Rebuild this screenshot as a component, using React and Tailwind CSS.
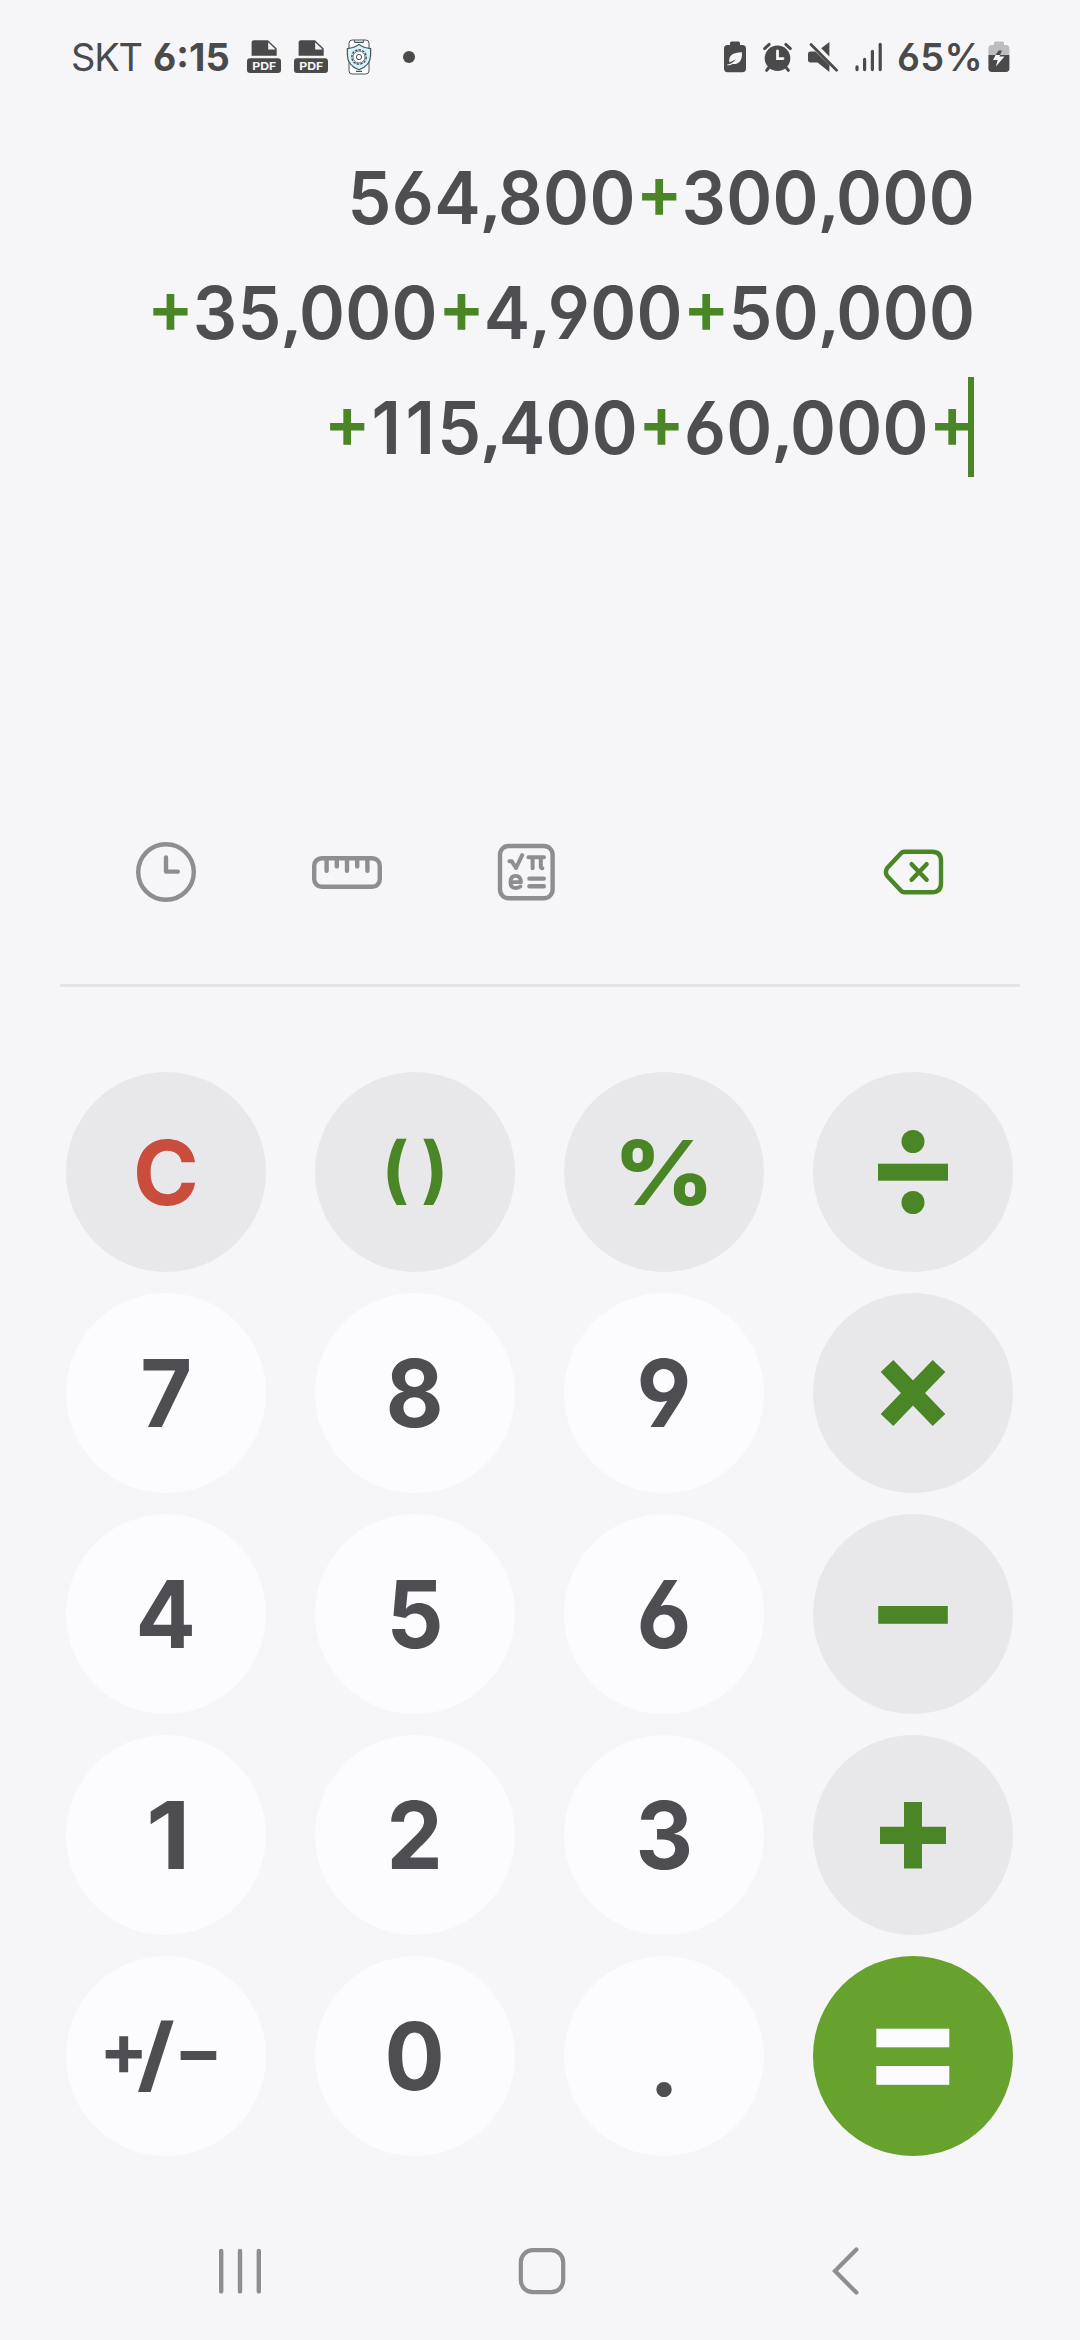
import React from "react";

const DARK = "#4a4a4a";

function PdfIcon({ className }) {
  return (
    <svg className={className} width="34" height="34" viewBox="0 0 34 34">
      <path d="M7 0.3H21L29.7 8.5V15.8H4.6V2.6Q4.6 0.3 7 0.3Z" fill={DARK} />
      <path d="M21.2 2.2V9.4H28.6Z" fill="#f6f6f8" />
      <rect x="0" y="18.3" width="34" height="14.8" rx="3" fill={DARK} />
      <text x="17.2" y="29.8" textAnchor="middle" textLength="24" lengthAdjust="spacingAndGlyphs" fontFamily="Inter, sans-serif" fontWeight="700" fontSize="11" fill="#f6f6f8">PDF</text>
    </svg>
  );
}

function ShieldPhoneIcon({ className }) {
  return (
    <svg className={className} width="26" height="36" viewBox="0 0 26 36" fill="none" stroke="#46545c" strokeWidth="1">
      <rect x="3" y="1" width="20" height="34" rx="3.2" fill="#fcfdfe" />
      <path d="M8.5 1.2V2.4Q8.5 3.3 9.5 3.3H16.5Q17.5 3.3 17.5 2.4V1.2M10 32.4H16" strokeWidth="1.2" />
      <path d="M13 5.4Q17.5 9 24.6 9.6V16Q24.6 26.5 13 30.7Q1.4 26.5 1.4 16V9.6Q8.5 9 13 5.4Z" fill="#d5f3f8" strokeWidth="1.2" />
      <circle cx="13" cy="18" r="7.2" fill="#fcfdfe" strokeWidth="1.4" strokeDasharray="2.6 1.1" />
      <circle cx="13" cy="18" r="6" fill="#fcfdfe" strokeWidth="0.8" />
      <circle cx="13" cy="18" r="2.6" />
    </svg>
  );
}

function StatusBar() {
  return (
    <header className="flex h-[113px] w-full items-start pl-[71px] pt-[39px] text-[#4a4a4a]">
      <div className="flex h-[36px] items-center">
        <span className="w-[82px] whitespace-nowrap text-[38px] font-normal leading-[36px] tracking-[-1.2px]">SKT</span>
        <span className="w-[94px] whitespace-nowrap text-[38px] font-bold leading-[36px]">6:15</span>
        <PdfIcon />
        <PdfIcon className="ml-[13px]" />
        <ShieldPhoneIcon className="ml-[18px]" />
        <span className="ml-[31px] size-3 rounded-full bg-[#4a4a4a]" />
      </div>
      <div className="ml-[309px] flex h-[36px] items-center">
        <svg width="22" height="32" viewBox="0 0 22 32">
          <path d="M6 4V2Q6 0.4 7.6 0.4H14.4Q16 0.4 16 2V4H18.4Q22 4 22 7.6V27.6Q22 31.2 18.4 31.2H3.6Q0 31.2 0 27.6V7.6Q0 4 3.6 4Z" fill={DARK} />
          <path d="M3.2 23.4C6.5 23.6 9.5 21 12 18.2C9 19.4 7.4 20.6 5.4 21.4C4.4 14.6 8.5 11.2 18 11.2C18.4 19 15.5 23.5 8.6 23C6.6 24.2 5 24.4 3.2 24.2Z" fill="#f6f6f8" />
        </svg>
        <svg className="ml-4" width="31" height="32" viewBox="0 0 31 32" fill="none" stroke={DARK} strokeLinecap="round">
          <circle cx="15.5" cy="17.2" r="12.8" fill={DARK} stroke="none" />
          <path d="M2.6 7.6L7.2 3.4M28.4 7.6L23.8 3.4" strokeWidth="3" />
          <path d="M6.5 27L4.6 29.4M24.5 27L26.4 29.4" strokeWidth="3" />
          <path d="M15.5 10V17.6H21" stroke="#f6f6f8" strokeWidth="2.8" />
        </svg>
        <svg className="ml-[15px]" width="31" height="32" viewBox="0 0 31 32">
          <path d="M0 13Q0 10.6 2.4 10.6H7.4L21.4 24V31L9.6 21.6H2.4Q0 21.6 0 19.2Z" fill={DARK} />
          <path d="M13.2 7.2L21.4 1V15.4Z" fill={DARK} />
          <path d="M3 3.6L28.6 29.2" stroke={DARK} strokeWidth="2.8" strokeLinecap="round" />
        </svg>
        <svg className="ml-4" width="28" height="32" viewBox="0 0 28 32" stroke={DARK} strokeWidth="3.2" strokeLinecap="round">
          <path d="M2 25.8V28.6M9.6 18.4V28.6M17.4 10.4V28.6M25.2 3.4V28.6" />
        </svg>
        <span className="ml-[14px] w-[91px] whitespace-nowrap text-[38px] font-semibold leading-[36px] tracking-[0.3px]">65%</span>
        <svg width="22" height="32" viewBox="0 0 22 32">
          <path d="M6 4V2Q6 0.4 7.6 0.4H14.4Q16 0.4 16 2V4H18.4Q21.4 4 21.4 7.6V14H0.4V7.6Q0.4 4 3.6 4Z" fill="#bdbdbf" />
          <path d="M0.4 14H21.4V27.6Q21.4 31 18 31H3.8Q0.4 31 0.4 27.6Z" fill={DARK} />
          <path d="M10.6 9.6H14L12 14H7.6Z" fill={DARK} />
          <path d="M7.6 14H12L11.6 15.6H16.4L8 25.4L9.6 19H5Z" fill="#f6f6f8" />
        </svg>
      </div>
    </header>
  );
}

const CHAR_STYLE = {
  ",": "inline-block w-[18px] font-['Noto_Sans'] leading-none",
  "1": "inline-block w-[35.5px] text-center",
  "+": "inline-block w-[48px] -translate-y-[6px] text-center text-[#4a8526]",
};

const LINES = ["564,800+300,000", "+35,000+4,900+50,000", "+115,400+60,000+"];

function Display() {
  return (
    <section className="flex h-[707px] flex-col items-end pr-[105px] pt-[27px] text-[73px] font-semibold leading-[115px] tracking-[0.35px] text-[#4e4d51]">
      {LINES.map((line, i) => (
        <div key={line} className="relative h-[115px]">
          <div className="origin-right scale-x-[0.955] whitespace-nowrap">
            {line.split(/([,1+])/).filter(Boolean).map((part, j) => (
              <span key={j} className={CHAR_STYLE[part]}>{part}</span>
            ))}
          </div>
          {i === LINES.length - 1 && <span className="absolute right-px top-[7px] h-[100px] w-[6px] bg-[#4a8526]" />}
        </div>
      ))}
    </section>
  );
}

function Toolbar() {
  return (
    <section className="mx-[60px] flex h-[167px] items-start border-b-[3px] border-[#e3e3e5] pl-[75px] pt-[21px]">
      <svg width="62" height="62" viewBox="0 0 62 62" fill="none" stroke="#8e8d91" strokeLinecap="round" strokeLinejoin="round">
        <circle cx="31" cy="31" r="27.8" strokeWidth="4.4" />
        <path d="M31 16.5V30.6H42.8" strokeWidth="4.4" />
      </svg>
      <svg className="ml-[114px]" width="72" height="62" viewBox="0 0 72 62" fill="none" stroke="#8e8d91" strokeLinecap="round">
        <rect x="3.2" y="17.2" width="65.6" height="28.6" rx="7.6" strokeWidth="4.4" />
        <path d="M15.6 18V29.8M25.8 18V25.4M36 18V29.8M46.2 18V25.4M56.4 18V29.8" strokeWidth="4.4" />
      </svg>
      <svg className="ml-[112px]" width="62" height="62" viewBox="0 0 62 62" fill="none" stroke="#8e8d91" strokeLinecap="round" strokeLinejoin="round">
        <rect x="5" y="5" width="52.6" height="52.2" rx="8.6" strokeWidth="4.4" />
        <path d="M14.4 20.2H16.6L21 27L27.2 14.2" strokeWidth="4" />
        <path d="M33.4 16.2H49M37.6 17V27.2M45.8 17V25.2Q45.8 27.4 47.4 27.2" strokeWidth="4" />
        <path d="M34.4 37.6H48.8M34.4 45.2H48.8" strokeWidth="4.4" />
        <path d="M15.6 41.2H26Q25.6 34.8 20.8 34.8Q15.4 34.8 15.4 41.2Q15.4 47 21.2 47Q23.8 47 25.4 45.4" strokeWidth="3.8" />
      </svg>
      <svg className="ml-[326px]" width="62" height="62" viewBox="0 0 62 62" fill="none" stroke="#4a8526" strokeLinecap="round" strokeLinejoin="round">
        <path d="M21.5 10.8H49Q58 10.8 58 19.8V42.2Q58 51.2 49 51.2H21.5Q19.5 51.2 17.8 49.6L4.2 35Q1.6 31 4.2 27L17.8 12.4Q19.5 10.8 21.5 10.8Z" strokeWidth="4.4" />
        <path d="M28.6 23.2L43.6 38.8M43.6 23.2L28.6 38.8" strokeWidth="4.4" />
      </svg>
    </section>
  );
}

function Key({ tone, label, children }) {
  return (
    <button
      aria-label={label}
      className={
        "flex size-[200px] items-center justify-center rounded-full text-[94px] font-bold leading-none " +
        (tone === "op" ? "bg-[#e8e8ea] text-[#4a8526]" : tone === "eq" ? "bg-[#67a22f] text-[#fcfbff]" : "bg-[#fcfcfe] text-[#4e4d51]")
      }
    >
      {children}
    </button>
  );
}

const Op = ({ children }) => (
  <svg width="200" height="200" viewBox="0 0 200 200" fill="currentColor">{children}</svg>
);

const Digit = ({ children }) => (
  <Key><span className="scale-x-[0.95]">{children}</span></Key>
);

function Keypad() {
  return (
    <section className="mt-[85px] grid grid-cols-[repeat(4,200px)] gap-x-[49px] gap-y-[21px] pl-[66px]">
      <Key tone="op"><span className="text-[89px] text-[#c94c3d]">C</span></Key>
      <Key tone="op">
        <span className="flex -translate-y-1 gap-3 text-[73px]"><span>(</span><span>)</span></span>
      </Key>
      <Key tone="op"><span className="scale-x-110 text-[89px] font-extrabold">%</span></Key>
      <Key tone="op" label="divide">
        <Op>
          <circle cx="100" cy="69.5" r="11.5" />
          <rect x="65" y="91.7" width="70" height="17" />
          <circle cx="100" cy="130.5" r="11.5" />
        </Op>
      </Key>
      <Digit>7</Digit>
      <Digit>8</Digit>
      <Digit>9</Digit>
      <Key tone="op" label="multiply">
        <Op>
          <path d="M74 73L126 127M126 73L74 127" stroke="currentColor" strokeWidth="17.5" />
        </Op>
      </Key>
      <Digit>4</Digit>
      <Digit>5</Digit>
      <Digit>6</Digit>
      <Key tone="op" label="subtract">
        <Op><rect x="65.2" y="92" width="69.6" height="17.8" /></Op>
      </Key>
      <Key><span className="translate-x-0.5 scale-x-110">1</span></Key>
      <Digit>2</Digit>
      <Digit>3</Digit>
      <Key tone="op" label="add">
        <Op><path d="M91 67H109V91.8H133V109H109V133.6H91V109H67V91.8H91Z" /></Op>
      </Key>
      <Key>
        <span className="flex -translate-x-[5px] items-center text-[72px]">
          <span className="-translate-y-[7px]">+</span>
          <span className="-ml-2 -translate-y-0.5 scale-x-[1.2] text-[82px]">/</span>
          <span className="ml-0.5 -translate-y-1.5">−</span>
        </span>
      </Key>
      <Digit>0</Digit>
      <Key><span className="translate-y-2 text-[90px]">.</span></Key>
      <Key tone="eq" label="equals">
        <Op>
          <rect x="63.3" y="72.7" width="73" height="18.6" />
          <rect x="63.3" y="110" width="73" height="18.8" />
        </Op>
      </Key>
    </section>
  );
}

function NavBar() {
  return (
    <nav className="mt-[88px] flex items-center pl-[215px] text-[#8e8e8e]">
      <svg width="50" height="54" viewBox="0 0 50 54" stroke="currentColor" strokeWidth="4.4" strokeLinecap="round">
        <path d="M6.2 7V47.4M25 7V47.4M43.8 7V47.4" />
      </svg>
      <svg className="ml-[250px]" width="54" height="54" viewBox="0 0 54 54" fill="none" stroke="currentColor" strokeWidth="4.2">
        <rect x="5.8" y="6.2" width="42.4" height="42" rx="12" />
      </svg>
      <svg className="ml-[257px]" width="40" height="54" viewBox="0 0 40 54" fill="none" stroke="currentColor" strokeWidth="4.2" strokeLinecap="round">
        <path d="M30.4 5.4L9 27L30.4 48.6" />
      </svg>
    </nav>
  );
}

export default function App() {
  return (
    <main className="h-[2340px] w-[1080px] overflow-hidden bg-[#f6f6f8] font-['Inter',sans-serif] [font-feature-settings:'cv03','cv04']">
      <StatusBar />
      <Display />
      <Toolbar />
      <Keypad />
      <NavBar />
    </main>
  );
}
